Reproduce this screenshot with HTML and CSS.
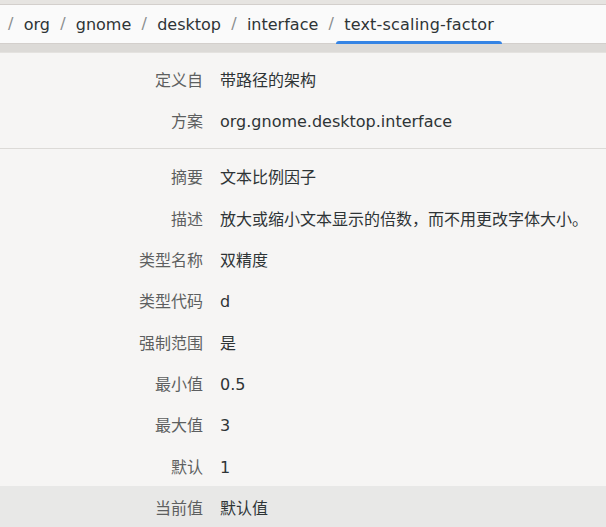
FILE: index.html
```html
<!DOCTYPE html>
<html lang="zh-CN">
<head>
<meta charset="utf-8">
<link rel="stylesheet" href="styles.css">
</head>
<body>
<div class="window">
  <div class="topstrip"></div>
  <nav class="pathbar">
    <span class="slash">/</span>
    <span class="crumb">org</span>
    <span class="slash">/</span>
    <span class="crumb">gnome</span>
    <span class="slash">/</span>
    <span class="crumb">desktop</span>
    <span class="slash">/</span>
    <span class="crumb">interface</span>
    <span class="slash">/</span>
    <span class="crumb active">text-scaling-factor</span>
  </nav>
  <div class="band"></div>
  <main class="content">
    <section class="props first">
      <div class="row"><span class="label">定义自</span><span class="value">带路径的架构</span></div>
      <div class="row"><span class="label">方案</span><span class="value">org.gnome.desktop.interface</span></div>
    </section>
    <hr class="sep">
    <section class="props">
      <div class="row"><span class="label">摘要</span><span class="value">文本比例因子</span></div>
      <div class="row"><span class="label">描述</span><span class="value">放大或缩小文本显示的倍数，而不用更改字体大小。</span></div>
      <div class="row"><span class="label">类型名称</span><span class="value">双精度</span></div>
      <div class="row"><span class="label">类型代码</span><span class="value">d</span></div>
      <div class="row"><span class="label">强制范围</span><span class="value">是</span></div>
      <div class="row"><span class="label">最小值</span><span class="value">0.5</span></div>
      <div class="row"><span class="label">最大值</span><span class="value">3</span></div>
      <div class="row"><span class="label">默认</span><span class="value">1</span></div>
      <div class="row current"><span class="label">当前值</span><span class="value">默认值</span></div>
    </section>
  </main>
</div>
</body>
</html>
```

FILE: styles.css
```css
html, body {
  margin: 0;
  padding: 0;
  height: 100%;
  overflow: hidden;
}
body {
  font-family: "DejaVu Sans", "Noto Sans CJK SC", sans-serif;
  font-size: 16px;
  color: #2e3436;
  background: #f6f5f4;
}
.window {
  display: flex;
  flex-direction: column;
}
.topstrip {
  height: 4px;
  background: #e6e4e1;
  border-bottom: 1px solid #d3cfcc;
}
.pathbar {
  height: 39px;
  background: #fafafa;
  border-bottom: 1px solid #d3cfcc;
  display: flex;
  align-items: center;
  padding-left: 8px;
  box-sizing: border-box;
}
.slash {
  color: #8b8e8f;
  line-height: 20px;
}
.crumb {
  position: relative;
  padding: 0 8px;
  margin: 0 2.25px;
  line-height: 39px;
  height: 39px;
  color: #2e3436;
}
.crumb.active {
  letter-spacing: 0.2px;
}
.crumb.active::after {
  content: "";
  position: absolute;
  left: 0;
  right: 0;
  bottom: 0;
  height: 3px;
  background: #3584e4;
  border-radius: 3px 3px 0 0;
}
.band {
  height: 8px;
  background: #dcdad7;
  border-bottom: 1px solid #e4e2df;
}
.content {
  display: flex;
  flex-direction: column;
}
.props.first {
  padding-top: 5px;
}
.row {
  display: grid;
  grid-template-columns: 203px 1fr;
  column-gap: 17px;
  align-items: center;
  height: 41.33px;
  padding-top: 4px;
  box-sizing: border-box;
  line-height: 20px;
}
.label {
  text-align: right;
  color: #5d5f60;
}
.value {
  color: #2e3436;
  white-space: nowrap;
}
.row.current {
  background: #e8e8e7;
}
.sep {
  margin: 7px 0;
  border: 0;
  border-top: 1px solid #dcdad7;
  height: 0;
}
```
